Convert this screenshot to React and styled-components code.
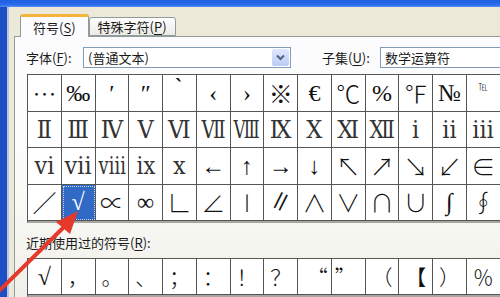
import React from "react";
import styled, { createGlobalStyle } from "styled-components";

const GlobalStyle = createGlobalStyle`
  html, body {
    margin: 0;
    padding: 0;
    width: 500px;
    height: 297px;
    overflow: hidden;
    background: #ece9d8;
  }
`;

const symbolRows = [
  ["…", "‰", "′", "″", "‵", "‹", "›", "※", "€", "℃", "%", "℉", "№", "℡"],
  ["Ⅱ", "Ⅲ", "Ⅳ", "Ⅴ", "Ⅵ", "Ⅶ", "Ⅷ", "Ⅸ", "Ⅹ", "Ⅺ", "Ⅻ", "ⅰ", "ⅱ", "ⅲ"],
  ["ⅵ", "ⅶ", "ⅷ", "ⅸ", "ⅹ", "←", "↑", "→", "↓", "↖", "↗", "↘", "↙", "∈"],
  ["∕", "√", "∝", "∞", "∟", "∠", "∣", "∥", "∧", "∨", "∩", "∪", "∫", "∮"],
];

const recent = ["√", "，", "。", "、", "；", "：", "！", "？", "“", "”", "（", "【", "）", "％"];

// glyphs that look right in the CJK face
const cjkChars = "…※℃℉℡↖↗↘↙∈∕∟∠∣∧∨∩∪∮∝“”";

// roman numerals get squeezed so they fit a cell like the SimSun ones
const romanSqueeze = {
  "Ⅱ": 1, "Ⅲ": 1, "Ⅳ": 1, "Ⅴ": 1, "Ⅵ": 1, "Ⅶ": 0.83,
  "Ⅷ": 0.74, "Ⅸ": 1, "Ⅹ": 1, "Ⅺ": 1, "Ⅻ": 0.9,
  "ⅰ": 1, "ⅱ": 1, "ⅲ": 1, "ⅵ": 1, "ⅶ": 1, "ⅷ": 0.8, "ⅸ": 0.95, "ⅹ": 1,
};

const faces = {
  serif: '"Liberation Serif", "Noto Sans CJK SC", serif',
  cjk: '"Noto Sans CJK SC", "Liberation Serif", sans-serif',
  roman: '"DejaVu Serif Condensed", "DejaVu Serif", serif',
};

const Window = styled.div`
  position: relative;
  width: 500px;
  height: 297px;
  display: flex;
  flex-direction: column;
  font-family: "Noto Sans CJK SC", sans-serif;
  font-size: 13px;
  color: #1a1a1a;
`;

const TitleStrip = styled.div`
  height: 7px;
  flex: none;
  background: linear-gradient(#1c5fe0, #2c6cf0 70%, #5a8ef2);
`;

const Body = styled.div`
  flex: 1;
  display: flex;
  min-height: 0;
`;

const SideFrame = styled.div`
  width: 7px;
  flex: none;
  background: #1d4ec6;
  border-right: 2px solid #b9c6e0;
`;

const Content = styled.div`
  flex: 1;
  display: flex;
  flex-direction: column;
  padding: 5px 0 0 5px;
  min-width: 0;
`;

const TabRow = styled.div`
  display: flex;
  align-items: flex-end;
  height: 24px;
  padding-left: 6px;
  position: relative;
  z-index: 1;
`;

const Tab = styled.div`
  height: ${(p) => (p.active ? "23px" : "19px")};
  padding: 0 ${(p) => (p.active ? "12px" : "8px")};
  display: flex;
  align-items: center;
  box-sizing: border-box;
  border: 1px solid #919b9c;
  border-bottom: ${(p) => (p.active ? "none" : "1px solid #919b9c")};
  border-top: ${(p) => (p.active ? "3px solid #f5b43c" : "1px solid #919b9c")};
  border-radius: 3px 3px 0 0;
  background: ${(p) => (p.active ? "#fcfcfe" : "linear-gradient(#ffffff, #ecebe6)")};
  margin-bottom: ${(p) => (p.active ? "-1px" : "0")};
  font-size: 13px;
  white-space: nowrap;
`;

const Key = styled.span`
  text-decoration: underline;
  text-underline-offset: 2px;
`;

const Panel = styled.div`
  flex: 1;
  border-left: 1px solid #919b9c;
  border-top: 1px solid #919b9c;
  background: linear-gradient(#fcfcfe 0%, #fbfbf8 55%, #f0efe9 100%);
  padding: 10px 0 0 11px;
  overflow: hidden;
  display: flex;
  flex-direction: column;
`;

const FontRow = styled.div`
  display: flex;
  align-items: center;
  height: 21px;
`;

const Label = styled.div`
  width: ${(p) => p.w}px;
  margin-left: ${(p) => p.ml || 0}px;
  flex: none;
  white-space: nowrap;
`;

const Combo = styled.div`
  width: ${(p) => p.w}px;
  height: 21px;
  box-sizing: border-box;
  border: 1px solid #7f9db9;
  background: #fff;
  display: flex;
  align-items: center;
  justify-content: space-between;
  padding-left: 4px;
  flex: none;
`;

const DropButton = styled.div`
  width: 17px;
  height: 17px;
  margin-right: 1px;
  border-radius: 2px;
  background: linear-gradient(#dfe8fd, #b9cbf5);
  display: flex;
  align-items: center;
  justify-content: center;
`;

const SymbolGrid = styled.div`
  margin: 6px 0 0 1px;
  display: grid;
  grid-template-columns: repeat(14, 33.75px);
  grid-auto-rows: ${(p) => p.rowH}px;
  border-left: 1px solid #555;
  border-top: 1px solid #555;
  border-bottom: 2px solid #a7a6a0;
  width: max-content;
  background: #fff;
`;

const Cell = styled.div`
  box-sizing: border-box;
  border-right: 1px solid #555;
  border-bottom: 1px solid #555;
  display: flex;
  align-items: ${(p) => (p.tiny ? "flex-start" : "center")};
  justify-content: ${(p) => p.justify || "center"};
  padding: ${(p) => (p.tiny ? "7px 0 0" : "0 3px")};
  font-family: ${(p) => faces[p.face]};
  font-size: ${(p) => (p.tiny ? 9 : p.face === "roman" ? 25 : p.small ? 21 : 24)}px;
  font-weight: ${(p) => (p.face === "cjk" ? 300 : 400)};
  line-height: 1;
  color: ${(p) => (p.selected ? "#fff" : p.face === "roman" ? "#333" : "#111")};
  background: ${(p) => (p.selected ? "#316ac5" : "#fff")};
  outline: ${(p) => (p.selected ? "1px dotted #c8d6f0" : "none")};
  outline-offset: -2px;
  overflow: hidden;
`;

const Glyph = styled.span`
  display: inline-block;
  white-space: nowrap;
  transform: scaleX(${(p) => p.squeeze});
`;

const RecentLabel = styled.div`
  margin-top: 9px;
  height: 20px;
  display: flex;
  align-items: center;
`;

const Pointer = styled.svg`
  position: absolute;
  left: 0;
  top: 0;
  pointer-events: none;
`;

const Chevron = () => (
  <svg width="9" height="7" viewBox="0 0 9 7">
    <path d="M1 1.5 L4.5 5 L8 1.5" fill="none" stroke="#4d6185" strokeWidth="2" />
  </svg>
);

const faceOf = (ch) => {
  if (romanSqueeze[ch]) return "roman";
  if (cjkChars.includes(ch)) return "cjk";
  return "serif";
};

const recentJustify = { "“": "flex-end", "”": "flex-start" };

export default function App() {
  return (
    <>
      <GlobalStyle />
      <Window>
        <TitleStrip />
        <Body>
          <SideFrame />
          <Content>
            <TabRow>
              <Tab active>
                符号(<Key>S</Key>)
              </Tab>
              <Tab>
                特殊字符(<Key>P</Key>)
              </Tab>
            </TabRow>
            <Panel>
              <FontRow>
                <Label w={57}>
                  字体(<Key>F</Key>):
                </Label>
                <Combo w={208}>
                  (普通文本)
                  <DropButton>
                    <Chevron />
                  </DropButton>
                </Combo>
                <Label w={58} ml={31}>
                  子集(<Key>U</Key>):
                </Label>
                <Combo w={200}>数学运算符</Combo>
              </FontRow>
              <SymbolGrid rowH={36.5}>
                {symbolRows.map((row, r) =>
                  row.map((ch, c) => (
                    <Cell
                      key={`${r}-${c}`}
                      face={faceOf(ch)}
                      tiny={ch === "℡"}
                      selected={r === 3 && c === 1}
                    >
                      <Glyph squeeze={romanSqueeze[ch] || 1}>{ch}</Glyph>
                    </Cell>
                  ))
                )}
              </SymbolGrid>
              <RecentLabel>
                近期使用过的符号(<Key>R</Key>):
              </RecentLabel>
              <SymbolGrid rowH={36}>
                {recent.map((ch, i) => (
                  <Cell
                    key={i}
                    face={i === 0 ? "serif" : "cjk"}
                    small={i > 0}
                    justify={recentJustify[ch]}
                  >
                    <Glyph squeeze={1}>{ch}</Glyph>
                  </Cell>
                ))}
              </SymbolGrid>
            </Panel>
          </Content>
        </Body>
        <Pointer width="500" height="297" viewBox="0 0 500 297">
          <line x1="-4" y1="294" x2="66" y2="225" stroke="#e5392c" strokeWidth="4" strokeLinecap="round" />
          <polygon points="78,211 56,222 70,234" fill="#e5392c" />
        </Pointer>
      </Window>
    </>
  );
}
